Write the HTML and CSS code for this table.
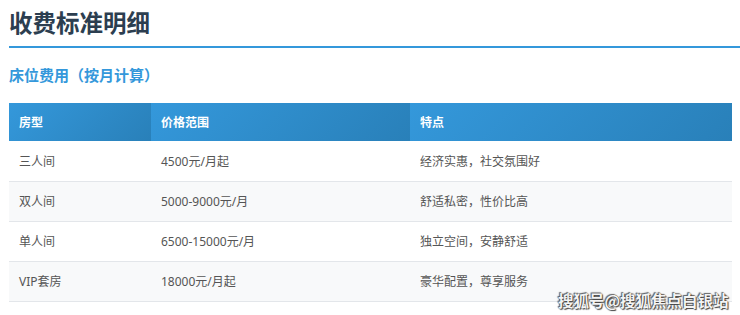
FILE: index.html
```html
<!DOCTYPE html>
<html lang="zh-CN">
<head>
<meta charset="utf-8">
<title>收费标准明细</title>
<link rel="stylesheet" href="styles.css">
</head>
<body>
<main class="page">
  <h2 class="title">收费标准明细</h2>
  <h3 class="subtitle">床位费用（按月计算）</h3>
  <table class="fees">
    <colgroup>
      <col class="c1"><col class="c2"><col class="c3">
    </colgroup>
    <thead>
      <tr><th>房型</th><th>价格范围</th><th>特点</th></tr>
    </thead>
    <tbody>
      <tr><td>三人间</td><td>4500元/月起</td><td>经济实惠，社交氛围好</td></tr>
      <tr><td>双人间</td><td>5000-9000元/月</td><td>舒适私密，性价比高</td></tr>
      <tr><td>单人间</td><td>6500-15000元/月</td><td>独立空间，安静舒适</td></tr>
      <tr><td>VIP套房</td><td>18000元/月起</td><td>豪华配置，尊享服务</td></tr>
    </tbody>
  </table>
  <div class="watermark">搜狐号@搜狐焦点白银站</div>
</main>
</body>
</html>
```

FILE: styles.css
```css
html, body {
  margin: 0;
  padding: 0;
  background: #fff;
}
body {
  font-family: "Noto Sans", "Noto Sans CJK SC", sans-serif;
  width: 740px;
  height: 315px;
  overflow: hidden;
}
.page {
  position: relative;
  height: 315px;
  padding-left: 9px;
  box-sizing: border-box;
}
.title {
  margin: 0;
  padding: 7px 0 7px 0;
  font-size: 23.5px;
  line-height: 32px;
  font-weight: 700;
  color: #2c3e50;
  border-bottom: 2px solid #3498db;
}
.subtitle {
  margin: 15px 0 16px 0;
  font-size: 15px;
  line-height: 24px;
  font-weight: 700;
  color: #3498db;
}
.fees {
  width: 723px;
  border-collapse: collapse;
  table-layout: fixed;
  font-size: 12px;
}
.fees .c1 { width: 142px; }
.fees .c2 { width: 259px; }
.fees .c3 { width: 322px; }
.fees th {
  height: 38px;
  padding: 0 10px;
  text-align: left;
  color: #fff;
  font-weight: 700;
  background: linear-gradient(135deg, #3498db, #2980b9);
  box-sizing: border-box;
}
.fees td {
  height: 40px;
  padding: 0 10px;
  color: #555;
  border-bottom: 1px solid #e3e6ea;
  box-sizing: border-box;
}
.fees tbody tr:nth-child(even) td {
  background: #f8f9fa;
}
.watermark {
  position: absolute;
  left: 558px;
  top: 290px;
  font-family: "Noto Sans CJK SC", sans-serif;
  font-size: 15.5px;
  line-height: 20px;
  font-weight: 700;
  color: #f4f4f4;
  text-shadow: 0 0 1px #333, 1px 1px 1px #444, -1px -1px 1px #666;
}
```
